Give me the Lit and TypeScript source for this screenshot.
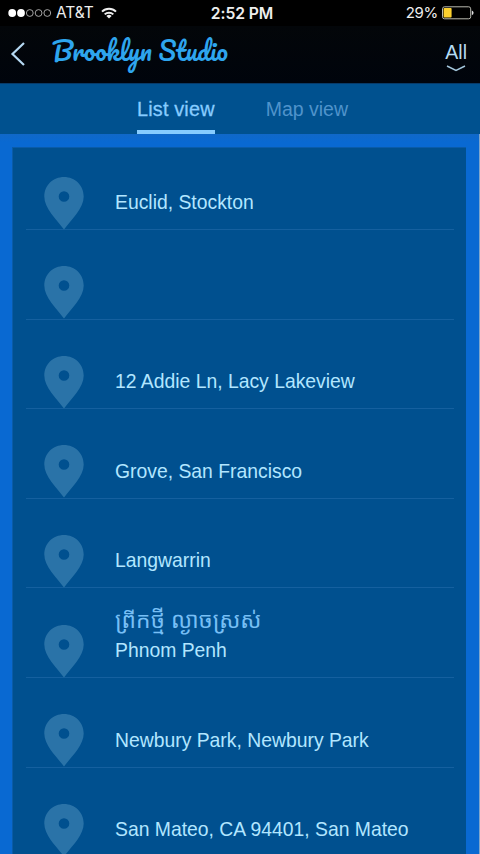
import { LitElement, html, css, nothing } from "lit";
import { customElement, property } from "lit/decorators.js";

interface Place {
  name?: string;
  address: string;
}

const PLACES: Place[] = [
  { address: "Euclid, Stockton" },
  { address: "" },
  { address: "12 Addie Ln, Lacy Lakeview" },
  { address: "Grove, San Francisco" },
  { address: "Langwarrin" },
  { name: "ព្រីកថ្មី ល្ងាចស្រស់", address: "Phnom Penh" },
  { address: "Newbury Park, Newbury Park" },
  { address: "San Mateo, CA 94401, San Mateo" },
];

@customElement("app-status-bar")
class StatusBar extends LitElement {
  render() {
    return html`
      <div class="carrier">
        <svg width="44" height="10" viewBox="0 0 44 10">
          <g fill="#fff">
            <circle cx="4.2" cy="5" r="3.9"></circle>
            <circle cx="13" cy="5" r="3.9"></circle>
          </g>
          <g fill="none" stroke="#b4b4b4" stroke-width="0.9">
            <circle cx="21.8" cy="5" r="3.4"></circle>
            <circle cx="30.6" cy="5" r="3.4"></circle>
            <circle cx="39.3" cy="5" r="3.4"></circle>
          </g>
        </svg>
        <span class="name">AT&amp;T</span>
        <svg class="wifi" width="16" height="12" viewBox="0 0 16 12">
          <g fill="none" stroke="#eee" stroke-width="2">
            <path d="M1 4.6A10 10 0 0 1 15 4.6"></path>
            <path d="M3.7 7.4A6.1 6.1 0 0 1 12.3 7.4"></path>
          </g>
          <path d="M8 11.6L5.4 9A3.7 3.7 0 0 1 10.6 9Z" fill="#eee"></path>
        </svg>
      </div>
      <div class="time">2:52 PM</div>
      <div class="power">
        <span>29%</span>
        <svg width="32" height="14" viewBox="0 0 32 14">
          <rect x="0.5" y="0.8" width="28.2" height="12" rx="2" fill="none" stroke="#b9b9b0"></rect>
          <rect x="1.6" y="2" width="8" height="9.6" rx="0.8" fill="#fcd02e"></rect>
          <path d="M29.8 4.4Q31.6 5 31.6 6.8T29.8 9.2Z" fill="#ddd"></path>
        </svg>
      </div>
    `;
  }

  static styles = [
    css`
      :host {
        display: grid;
        grid-template-columns: 1fr auto 1fr;
        align-items: center;
        height: 26px;
        padding: 0 6px 0 8px;
        background: #000;
        color: #eee;
        font-family: Inter, "Liberation Sans", sans-serif;
        font-size: 15px;
        line-height: 26px;
      }

      .carrier,
      .power {
        display: flex;
        align-items: center;
      }

      .carrier .name {
        margin-left: 4px;
        font-size: 15.5px;
        letter-spacing: -0.05px;
      }

      .wifi {
        margin-left: 7px;
      }

      .time {
        padding-left: 2px;
        font-size: 15.7px;
        font-weight: 600;
        line-height: 27px;
        letter-spacing: -0.1px;
      }

      .power {
        justify-content: flex-end;
        gap: 4px;
        letter-spacing: -0.3px;
      }

      .carrier,
      .power {
        height: 26px;
        align-self: start;
      }
    `,
  ];
}

@customElement("app-place-row")
class PlaceRow extends LitElement {
  @property({ attribute: false })
  place: Place = { address: "" };

  render() {
    const { name, address } = this.place;

    return html`
      <svg class="pin" width="40" height="53" viewBox="0 0 40 53">
        <path
          fill-rule="evenodd"
          d="M20 0C9 0 0.3 8.4 0.3 19.5C0.3 31.5 12.5 42.5 20 52.5C27.5 42.5 39.7 31.5 39.7 19.5C39.7 8.4 31 0 20 0ZM20 14.2A5.3 5.3 0 1 1 20 24.8A5.3 5.3 0 1 1 20 14.2Z"
        ></path>
      </svg>
      <div class="text">
        ${name ? html`<div class="name">${name}</div>` : nothing}
        <div class="address">${address}</div>
      </div>
    `;
  }

  static styles = [
    css`
      :host {
        display: flex;
        align-items: flex-end;
        box-sizing: border-box;
        height: 89.6px;
        border-bottom: 1px solid #15609f;
      }

      .pin {
        flex: none;
        margin: 0 0 -0.7px 18px;
        fill: #2a73a8;
      }

      .text {
        margin: 0 0 14px 31.5px;
        white-space: nowrap;
      }

      .name {
        color: #77bff5;
        font-family: "Noto Sans Khmer", "Khmer OS", "Noto Sans", sans-serif;
        font-size: 22.8px;
        line-height: 35px;
      }

      .address {
        min-height: 26px;
        color: #b2e6ff;
        font-size: 19.35px;
        line-height: 26px;
      }
    `,
  ];
}

@customElement("app-root")
class AppRoot extends LitElement {
  render() {
    return html`
      <app-status-bar></app-status-bar>
      <header class="header">
        <svg class="back" width="16" height="26" viewBox="0 0 16 26">
          <path d="M14 2L2.5 13L14 24"></path>
        </svg>
        <h1 class="title">Brooklyn Studio</h1>
        <div class="filter">
          <span>All</span>
          <svg width="20" height="7" viewBox="0 0 20 7">
            <path d="M1 1L10 5.5L19 1"></path>
          </svg>
        </div>
      </header>
      <nav class="tabs">
        <div class="tab active">List view</div>
        <div class="tab">Map view</div>
      </nav>
      <main class="content">
        <div class="card">
          ${PLACES.map((place) => html`<app-place-row .place=${place}></app-place-row>`)}
        </div>
      </main>
    `;
  }

  static styles = [
    css`
      :host {
        display: flex;
        flex-direction: column;
        height: 854px;
        overflow: hidden;
        background: #00508f;
        font-family: "Liberation Sans", Arial, sans-serif;
      }

      .header {
        display: flex;
        flex: none;
        box-sizing: border-box;
        height: 57px;
        padding: 0 13px 0 10px;
        background: linear-gradient(#030609, #00040c);
      }

      .back {
        margin-top: 15px;
        fill: none;
        stroke: #b5d8f2;
        stroke-width: 2.2;
      }

      .title {
        flex: 1;
        margin: 6px 0 0 26px;
        color: #2ea5ee;
        font-family: Pacifico, "Liberation Serif", cursive;
        font-size: 25.2px;
        font-weight: 400;
        line-height: 36px;
        white-space: nowrap;
      }

      .filter {
        display: flex;
        flex-direction: column;
        align-items: center;
        margin-top: 15px;
        color: #b5dcf2;
        font-size: 19.5px;
        line-height: 23px;
      }

      .filter svg {
        margin-top: 1px;
        fill: none;
        stroke: #a3c6dc;
        stroke-width: 1.5;
      }

      .tabs {
        display: flex;
        flex: none;
        box-sizing: border-box;
        height: 51px;
        padding-left: 137px;
        gap: 51px;
        border-top: 1px solid #083a68;
        background: #00518f;
      }

      .tab {
        box-sizing: border-box;
        height: 50px;
        color: #4f93cb;
        font-size: 19.5px;
        line-height: 50px;
      }

      .tab.active {
        border-bottom: 4px solid #87ccff;
        color: #87ccff;
        font-size: 19.8px;
        letter-spacing: 0.2px;
        -webkit-text-stroke: 0.3px #87ccff;
      }

      .content {
        flex: 1;
        min-height: 0;
        padding: 13px 13px 0 12px;
        border-right: 1px solid #7fa6cc;
        background: linear-gradient(#1068c8, #0969d2 8px);
      }

      .card {
        box-sizing: border-box;
        height: 100%;
        padding: 0 12.5px;
        overflow: hidden;
        border: solid #0a5ba8;
        border-width: 1px 0 0 1px;
        background: #00508f;
      }

      .card app-place-row:first-child {
        height: 82px;
      }
    `,
  ];
}

export { StatusBar, PlaceRow };
export default AppRoot;
